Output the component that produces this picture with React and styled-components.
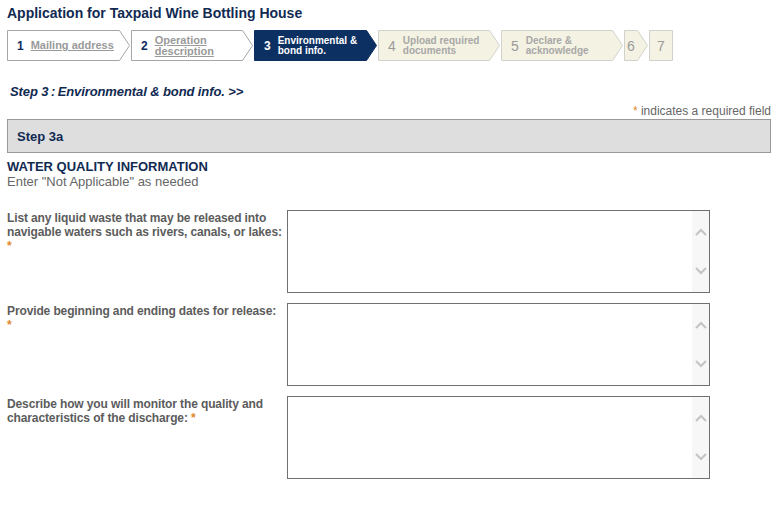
import React from 'react';
import styled, { createGlobalStyle } from 'styled-components';

const GlobalStyle = createGlobalStyle`
  body {
    margin: 0;
    background: #fff;
    font-family: "Liberation Sans", Arial, sans-serif;
  }
`;

const Page = styled.div`
  padding: 0 12px 20px 7px;
  width: 764px;
`;

const Title = styled.h1`
  margin: 4px 0 0;
  font-size: 14px;
  line-height: 18px;
  font-weight: bold;
  color: #112a52;
`;

// Wizard bar
const Steps = styled.div`
  display: flex;
  gap: 1px;
  margin-top: 8px;
`;

const StepItem = styled.div`
  position: relative;
  display: flex;
  align-items: center;
  justify-content: ${(p) => (p.$narrow ? 'center' : 'flex-start')};
  width: ${(p) => p.$w}px;
  height: 31px;
  padding-left: ${(p) => (p.$narrow ? '0' : '10px')};
  padding-right: ${(p) => (p.$tip ? '10px' : '0')};
  box-sizing: border-box;
  gap: 7px;
`;

const Shape = styled.svg`
  position: absolute;
  inset: 0;
  z-index: 0;
`;

const StepNum = styled.span`
  position: relative;
  z-index: 1;
  font-size: ${(p) => (p.$state === 'todo' ? '14px' : '12px')};
  font-weight: ${(p) => (p.$state === 'todo' ? 'normal' : 'bold')};
  color: ${(p) =>
    p.$state === 'done' ? '#0d2b5e' : p.$state === 'current' ? '#fff' : '#9a9a9a'};
`;

const StepLabel = styled.span`
  position: relative;
  z-index: 1;
  font-size: ${(p) => (p.$state === 'done' ? '11px' : '10px')};
  line-height: ${(p) => (p.$state === 'done' ? '11px' : '10px')};
  font-weight: bold;
  color: ${(p) => (p.$state === 'current' ? '#fff' : p.$state === 'done' ? '#9a9a9a' : '#a8a8a8')};
  text-decoration: ${(p) => (p.$state === 'done' ? 'underline' : 'none')};
`;

const palette = {
  done: { fill: '#ffffff', stroke: '#a6a6a6' },
  current: { fill: '#0c3062', stroke: '#0c3062' },
  todo: { fill: '#f4f2e2', stroke: '#d2d2cc' },
};

function Step({ n, label, state, w, tip = true }) {
  const c = palette[state];
  const pts = tip
    ? `0.5,0.5 ${w - 10.5},0.5 ${w - 0.5},15.5 ${w - 10.5},30.5 0.5,30.5`
    : `0.5,0.5 ${w - 0.5},0.5 ${w - 0.5},30.5 0.5,30.5`;
  return (
    <StepItem $w={w} $tip={tip} $narrow={!label}>
      <Shape width={w} height={31} viewBox={`0 0 ${w} 31`}>
        <polygon points={pts} fill={c.fill} stroke={c.stroke} strokeWidth="1" />
      </Shape>
      <StepNum $state={state}>{n}</StepNum>
      {label && <StepLabel $state={state}>{label}</StepLabel>}
    </StepItem>
  );
}

const SubHeading = styled.div`
  margin-top: 23px;
  padding-left: 3px;
  font-size: 13px;
  line-height: 16px;
  font-weight: bold;
  font-style: italic;
  letter-spacing: -0.1px;
  color: #112a52;
`;

const RequiredNote = styled.div`
  margin-top: 4px;
  text-align: right;
  font-size: 12px;
  line-height: 14px;
  color: #666;
`;

const Req = styled.span`
  color: #e0892c;
  display: ${(p) => (p.$block ? 'block' : 'inline')};
`;

const StepBar = styled.div`
  margin-top: 1px;
  height: 34px;
  box-sizing: border-box;
  display: flex;
  align-items: center;
  padding-left: 9px;
  background: #dedede;
  border: 1px solid #999;
  font-size: 13px;
  font-weight: bold;
  color: #112a52;
`;

const SectionTitle = styled.div`
  margin-top: 7px;
  font-size: 13px;
  line-height: 14px;
  font-weight: bold;
  color: #112a52;
`;

const Hint = styled.div`
  font-size: 13px;
  line-height: 16px;
  color: #666;
`;

const Form = styled.div`
  margin-top: 20px;
  display: flex;
  flex-direction: column;
  gap: 10px;
`;

const Row = styled.div`
  display: grid;
  grid-template-columns: 280px 423px;
`;

const Label = styled.label`
  padding-top: 1px;
  font-size: 12px;
  line-height: 14px;
  font-weight: bold;
  letter-spacing: -0.12px;
  color: #5c5c5c;
  white-space: nowrap;
`;

const Field = styled.div`
  display: flex;
  height: 83px;
  box-sizing: border-box;
  border: 1px solid #707070;
  background: #fff;
`;

const Area = styled.textarea`
  flex: 1;
  border: none;
  outline: none;
  resize: none;
  overflow: hidden;
  padding: 2px;
  font-family: "Liberation Sans", Arial, sans-serif;
  font-size: 12px;
`;

const ScrollTrack = styled.div`
  width: 17px;
  background: #f7f7f7;
  display: flex;
  flex-direction: column;
  justify-content: space-between;
  align-items: center;
  padding: 17px 0;
`;

const Chevron = ({ down }) => (
  <svg width="12" height="10" viewBox="0 0 12 10">
    <polyline
      points={down ? '1,3 6,8 11,3' : '1,7 6,2 11,7'}
      fill="none"
      stroke="#c4c4c4"
      strokeWidth="2"
    />
  </svg>
);

const TextBox = () => (
  <Field>
    <Area />
    <ScrollTrack>
      <Chevron />
      <Chevron down />
    </ScrollTrack>
  </Field>
);

const steps = [
  { n: 1, label: 'Mailing address', state: 'done', w: 123 },
  { n: 2, label: <>Operation<br />description</>, state: 'done', w: 122 },
  { n: 3, label: <>Environmental &amp;<br />bond info.</>, state: 'current', w: 123 },
  { n: 4, label: <>Upload required<br />documents</>, state: 'todo', w: 122 },
  { n: 5, label: <>Declare &amp;<br />acknowledge</>, state: 'todo', w: 122 },
  { n: 6, state: 'todo', w: 24 },
  { n: 7, state: 'todo', w: 24, tip: false },
];

export default function App() {
  return (
    <Page>
      <GlobalStyle />
      <Title>Application for Taxpaid Wine Bottling House</Title>
      <Steps>
        {steps.map((s) => (
          <Step key={s.n} {...s} />
        ))}
      </Steps>

      <SubHeading>Step 3&thinsp;:&thinsp;Environmental &amp; bond info. &gt;&gt;</SubHeading>
      <RequiredNote>
        <Req>*</Req> indicates a required field
      </RequiredNote>
      <StepBar>Step 3a</StepBar>

      <SectionTitle>WATER QUALITY INFORMATION</SectionTitle>
      <Hint>Enter "Not Applicable" as needed</Hint>

      <Form>
        <Row>
          <Label>
            List any liquid waste that may be released into
            <br />
            navigable waters such as rivers, canals, or lakes:
            <Req $block>*</Req>
          </Label>
          <TextBox />
        </Row>
        <Row>
          <Label>
            Provide beginning and ending dates for release:
            <Req $block>*</Req>
          </Label>
          <TextBox />
        </Row>
        <Row>
          <Label>
            Describe how you will monitor the quality and
            <br />
            characteristics of the discharge: <Req>*</Req>
          </Label>
          <TextBox />
        </Row>
      </Form>
    </Page>
  );
}
